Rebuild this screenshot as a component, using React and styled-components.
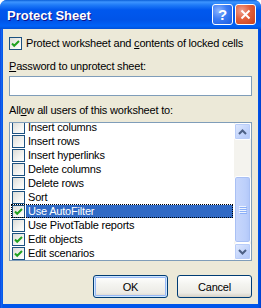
import React, { useLayoutEffect, useRef } from 'react';
import styled, { createGlobalStyle } from 'styled-components';

const GlobalStyle = createGlobalStyle`
  html, body { margin: 0; padding: 0; background: #fff; }
  * { box-sizing: border-box; }
`;

const items = [
  { label: 'Select locked cells', checked: true },
  { label: 'Select unlocked cells', checked: true },
  { label: 'Format cells', checked: false },
  { label: 'Format columns', checked: false },
  { label: 'Format rows', checked: false },
  { label: 'Insert columns', checked: false },
  { label: 'Insert rows', checked: false },
  { label: 'Insert hyperlinks', checked: false },
  { label: 'Delete columns', checked: false },
  { label: 'Delete rows', checked: false },
  { label: 'Sort', checked: false },
  { label: 'Use AutoFilter', checked: true, selected: true },
  { label: 'Use PivotTable reports', checked: false },
  { label: 'Edit objects', checked: true },
  { label: 'Edit scenarios', checked: true },
];

const ROW = 14;
const LIST_INNER = 137;

const Window = styled.div`
  width: 261px;
  height: 308px;
  display: flex;
  flex-direction: column;
  background: linear-gradient(to right, #0831d9 0, #166aee 1px, #0055ea 3px, #0055ea 258px, #0040d0 261px);
  border-radius: 7px 7px 0 0;
  overflow: hidden;
  font-family: "Liberation Sans", Arial, sans-serif;
  font-size: 11px;
  letter-spacing: -0.2px;
  color: #000;
  white-space: nowrap;
`;

const TitleBar = styled.div`
  height: 29px;
  flex: none;
  display: flex;
  align-items: center;
  padding: 0 5px 0 7px;
  gap: 2px;
  background: linear-gradient(to bottom, #0a5fd8 0, #3d95ff 2px, #1f7bf7 5px, #0058ee 10px, #0054e8 20px, #0062f7 26px, #0050d8 29px);
`;

const Title = styled.div`
  flex: 1;
  color: #fff;
  font-weight: bold;
  font-size: 13px;
  letter-spacing: 0;
  text-shadow: 1px 1px #0f1089;
  padding-top: 1px;
`;

const CaptionButton = styled.div`
  width: 21px;
  height: 21px;
  border: 1px solid #fff;
  border-radius: 3px;
  display: flex;
  align-items: center;
  justify-content: center;
  color: #fff;
  font-weight: bold;
  font-size: 15px;
  background: ${p => p.$close
    ? 'radial-gradient(circle at 30% 30%, #f0a090 0, #e2603c 45%, #c8401a 100%)'
    : 'radial-gradient(circle at 30% 30%, #8cb4ff 0, #3c7cf4 45%, #1a5ce0 100%)'};
`;

const Body = styled.div`
  flex: 1;
  margin: 0 3px 4px;
  background: #ece9d8;
  padding: 8px 6px 0;
  display: flex;
  flex-direction: column;
`;

const CheckRow = styled.label`
  display: flex;
  align-items: center;
  gap: 4px;
  height: 13px;
  line-height: 13px;
`;

const Box = styled.span`
  width: 13px;
  height: 13px;
  flex: none;
  border: 1px solid #1c5180;
  background: linear-gradient(135deg, #dcdcd7 0, #f4f4f1 60%, #ffffff 100%);
  display: flex;
  align-items: center;
  justify-content: center;
`;

const Label = styled.div`
  height: 13px;
  line-height: 13px;
  margin-top: ${p => p.$mt}px;
`;

const TextInput = styled.div`
  height: 20px;
  margin-top: 3px;
  border: 1px solid #7f9db9;
  background: #fff;
`;

const ListBox = styled.div`
  height: 139px;
  margin-top: 5px;
  border: 1px solid #7f9db9;
  background: #fff;
  display: flex;
`;

const ListItems = styled.div`
  flex: 1;
  overflow: hidden;
  padding-left: 1px;
  padding-right: 1px;
`;

const Item = styled.div`
  height: ${ROW}px;
  display: flex;
  align-items: flex-start;
  padding: 1px 0 0 1px;
  outline: ${p => p.$selected ? '1px dotted #000' : 'none'};
  outline-offset: -1px;
`;

const ItemText = styled.span`
  flex: 1;
  height: 13px;
  line-height: 13px;
  margin-left: 1px;
  padding-left: 2px;
  background: ${p => p.$selected ? '#316ac5' : 'transparent'};
  color: ${p => p.$selected ? '#fff' : '#000'};
`;

const ScrollBar = styled.div`
  width: 17px;
  flex: none;
  display: flex;
  flex-direction: column;
  background: #f4f3ee;
`;

const ScrollButton = styled.div`
  width: 17px;
  height: 17px;
  flex: none;
  border: 1px solid #fff;
  border-radius: 2px;
  background: linear-gradient(to bottom right, #e1eafe, #c1d3fb 60%, #b4c8f6);
  box-shadow: inset 0 0 0 1px #b9cdf9;
  display: flex;
  align-items: center;
  justify-content: center;
`;

const Track = styled.div`
  flex: 1;
  display: flex;
  flex-direction: column;
  justify-content: flex-end;
`;

const Thumb = styled.div`
  border: 1px solid #fff;
  border-radius: 3px;
  background: linear-gradient(to right, #c9d8fc, #bccffb 70%, #b0c6f8);
  box-shadow: inset 0 0 0 1px #a9c0f4;
  display: flex;
  flex-direction: column;
  align-items: center;
  justify-content: center;
  gap: 1px;
`;

const Grip = styled.span`
  width: 7px;
  height: 1px;
  background: #eef4fe;
  box-shadow: 1px 1px 0 #8cb0f8;
`;

const ButtonRow = styled.div`
  display: flex;
  justify-content: flex-end;
  gap: 9px;
  margin-top: 14px;
`;

const Button = styled.div`
  width: 75px;
  height: 23px;
  border: 1px solid #003c74;
  border-radius: 3px;
  background: linear-gradient(to bottom, #ffffff 0, #f4f4f0 40%, #ecebe6 80%, #d6d0c5 100%);
  box-shadow: ${p => p.$default ? 'inset 0 0 0 1px #cee7ff, inset 0 0 0 2px #98b8f4' : 'none'};
  display: flex;
  align-items: center;
  justify-content: center;
`;

function Check() {
  return (
    <svg width="9" height="9" viewBox="0 0 9 9">
      <path d="M1 4.5 L3.2 6.8 L8 2" fill="none" stroke="#21a121" strokeWidth="2" />
    </svg>
  );
}

function ListScroller() {
  const ref = useRef(null);
  useLayoutEffect(() => {
    const el = ref.current;
    el.scrollTop = el.scrollHeight - el.clientHeight;
  }, []);
  return (
    <ListItems ref={ref}>
      {items.map(it => (
        <Item key={it.label} $selected={it.selected}>
          <Box>{it.checked && <Check />}</Box>
          <ItemText $selected={it.selected}>{it.label}</ItemText>
        </Item>
      ))}
    </ListItems>
  );
}

export default function App() {
  const trackH = LIST_INNER - 34;
  const thumbH = Math.round(trackH * LIST_INNER / (items.length * ROW));

  return (
    <>
      <GlobalStyle />
      <Window>
        <TitleBar>
          <Title>Protect Sheet</Title>
          <CaptionButton>?</CaptionButton>
          <CaptionButton $close>
            <svg width="11" height="11" viewBox="0 0 11 11">
              <path d="M1.5 1.5 L9.5 9.5 M9.5 1.5 L1.5 9.5" stroke="#fff" strokeWidth="2" />
            </svg>
          </CaptionButton>
        </TitleBar>
        <Body>
          <CheckRow>
            <Box><Check /></Box>
            <span>Protect worksheet and <u>c</u>ontents of locked cells</span>
          </CheckRow>
          <Label $mt={10}><u>P</u>assword to unprotect sheet:</Label>
          <TextInput />
          <Label $mt={8}>All<u>o</u>w all users of this worksheet to:</Label>
          <ListBox>
            <ListScroller />
            <ScrollBar>
              <ScrollButton>
                <svg width="9" height="6" viewBox="0 0 9 6">
                  <path d="M1 5 L4.5 1.5 L8 5" fill="none" stroke="#4d6185" strokeWidth="2" />
                </svg>
              </ScrollButton>
              <Track>
                <Thumb style={{ height: thumbH }}>
                  <Grip /><Grip /><Grip /><Grip />
                </Thumb>
              </Track>
              <ScrollButton>
                <svg width="9" height="6" viewBox="0 0 9 6">
                  <path d="M1 1 L4.5 4.5 L8 1" fill="none" stroke="#4d6185" strokeWidth="2" />
                </svg>
              </ScrollButton>
            </ScrollBar>
          </ListBox>
          <ButtonRow>
            <Button $default>OK</Button>
            <Button>Cancel</Button>
          </ButtonRow>
        </Body>
      </Window>
    </>
  );
}
